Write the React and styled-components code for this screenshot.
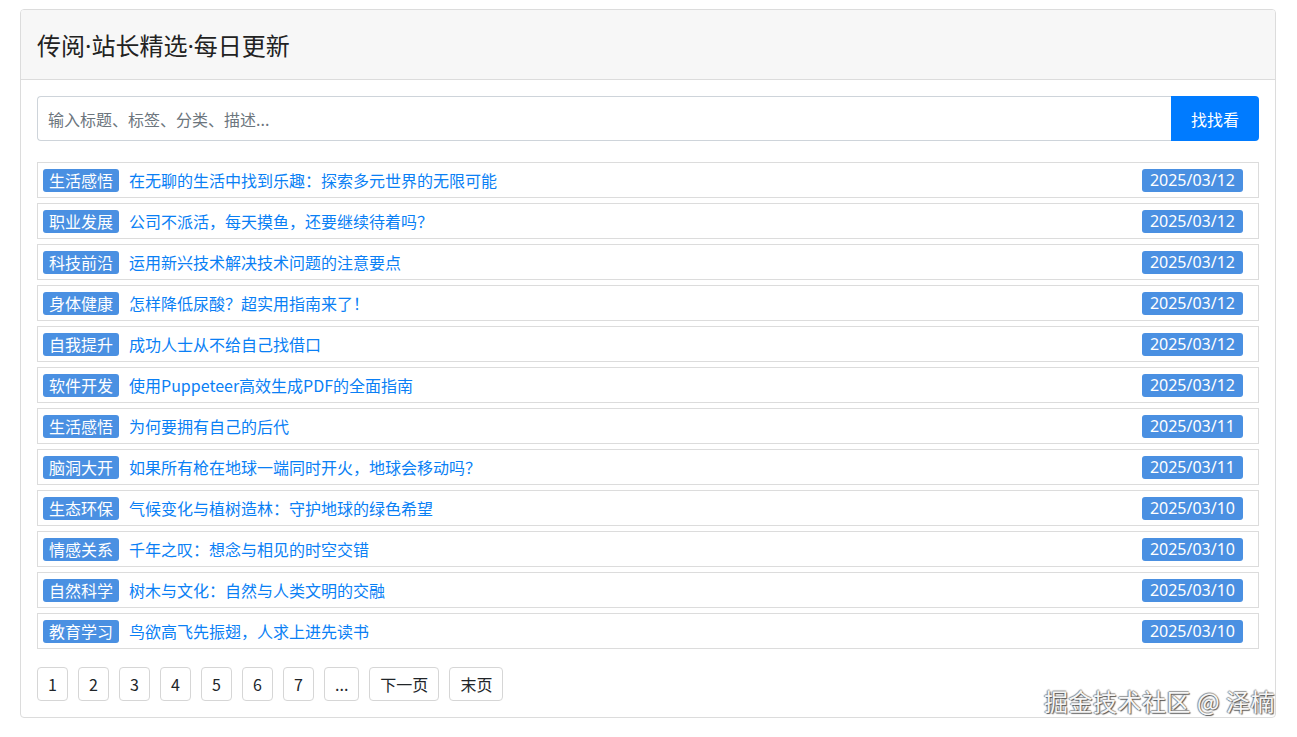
import React from "react";
import styled, { createGlobalStyle } from "styled-components";

const GlobalStyle = createGlobalStyle`
  body {
    margin: 0;
    background: #fff;
    font-family: "Noto Sans CJK SC", "Noto Sans", sans-serif;
    color: #212529;
  }
`;

const Page = styled.div`
  padding: 9px 21px 0 20px;
  position: relative;
  height: 737px;
  box-sizing: border-box;
`;

const Card = styled.div`
  border: 1px solid #dcdcdc;
  border-radius: 4px;
  overflow: hidden;
`;

const CardHeader = styled.div`
  background: #f7f7f7;
  border-bottom: 1px solid #dcdcdc;
  height: 69px;
  display: flex;
  align-items: center;
  padding: 0 16px;
`;

const Title = styled.h1`
  margin: 0;
  font-family: "Noto Sans", "Noto Sans CJK SC", sans-serif;
  font-size: 24px;
  font-weight: 400;
  color: #222;
`;

const CardBody = styled.div`
  padding: 16px;
`;

const SearchRow = styled.div`
  display: flex;
  height: 45px;
  margin-bottom: 21px;
`;

const SearchInput = styled.input`
  flex: 1;
  border: 1px solid #ced4da;
  border-right: none;
  border-radius: 4px 0 0 4px;
  padding: 0 10px;
  font-size: 16px;
  font-family: inherit;
  outline: none;
  &::placeholder {
    color: #6c757d;
  }
`;

const SearchButton = styled.button`
  width: 88px;
  border: none;
  background: #007bff;
  color: #fff;
  font-size: 16px;
  font-family: inherit;
  border-radius: 0 4px 4px 0;
`;

const List = styled.div`
  display: flex;
  flex-direction: column;
  gap: 5px;
`;

const Row = styled.div`
  display: flex;
  align-items: center;
  height: 36px;
  box-sizing: border-box;
  border: 1px solid #dcdcdc;
  padding: 0 15px 0 5px;
`;

const Badge = styled.span`
  display: inline-flex;
  align-items: center;
  height: 23px;
  padding: 0 6px;
  background: #4a90e2;
  color: #fff;
  font-size: 16px;
  border-radius: 3px;
  line-height: 1;
`;

const Link = styled.a`
  margin-left: 10px;
  color: #0a7ff5;
  font-size: 16px;
  text-decoration: none;
  flex: 1;
`;

const DateBadge = styled(Badge)`
  font-family: "Noto Sans", sans-serif;
  padding: 0 8px;
`;

const Pager = styled.div`
  display: flex;
  gap: 10px;
  margin-top: 18px;
`;

const PageButton = styled.button`
  height: 34px;
  padding: 0 10px;
  min-width: 31px;
  border: 1px solid #d6d6d6;
  border-radius: 4px;
  background: #fff;
  color: #212529;
  font-size: 16px;
  font-family: inherit;
`;

const Watermark = styled.div`
  position: absolute;
  right: 22px;
  bottom: 19px;
  font-size: 24px;
  color: #f6f6f6;
  text-shadow: 1px 1px 1px #555, -1px 0 1px #888, 0 -1px 1px #999;
  letter-spacing: 0.5px;
`;

const items = [
  ["生活感悟", "在无聊的生活中找到乐趣：探索多元世界的无限可能", "2025/03/12"],
  ["职业发展", "公司不派活，每天摸鱼，还要继续待着吗？", "2025/03/12"],
  ["科技前沿", "运用新兴技术解决技术问题的注意要点", "2025/03/12"],
  ["身体健康", "怎样降低尿酸？超实用指南来了！", "2025/03/12"],
  ["自我提升", "成功人士从不给自己找借口", "2025/03/12"],
  ["软件开发", "使用Puppeteer高效生成PDF的全面指南", "2025/03/12"],
  ["生活感悟", "为何要拥有自己的后代", "2025/03/11"],
  ["脑洞大开", "如果所有枪在地球一端同时开火，地球会移动吗？", "2025/03/11"],
  ["生态环保", "气候变化与植树造林：守护地球的绿色希望", "2025/03/10"],
  ["情感关系", "千年之叹：想念与相见的时空交错", "2025/03/10"],
  ["自然科学", "树木与文化：自然与人类文明的交融", "2025/03/10"],
  ["教育学习", "鸟欲高飞先振翅，人求上进先读书", "2025/03/10"],
];

const pages = ["1", "2", "3", "4", "5", "6", "7", "...", "下一页", "末页"];

export default function App() {
  return (
    <>
      <GlobalStyle />
      <Page>
        <Card>
          <CardHeader>
            <Title>传阅·站长精选·每日更新</Title>
          </CardHeader>
          <CardBody>
            <SearchRow>
              <SearchInput placeholder="输入标题、标签、分类、描述..." />
              <SearchButton>找找看</SearchButton>
            </SearchRow>
            <List>
              {items.map(([tag, title, date], i) => (
                <Row key={i}>
                  <Badge>{tag}</Badge>
                  <Link href="#">{title}</Link>
                  <DateBadge>{date}</DateBadge>
                </Row>
              ))}
            </List>
            <Pager>
              {pages.map((p) => (
                <PageButton key={p}>{p}</PageButton>
              ))}
            </Pager>
          </CardBody>
        </Card>
        <Watermark>掘金技术社区 @ 泽楠</Watermark>
      </Page>
    </>
  );
}
